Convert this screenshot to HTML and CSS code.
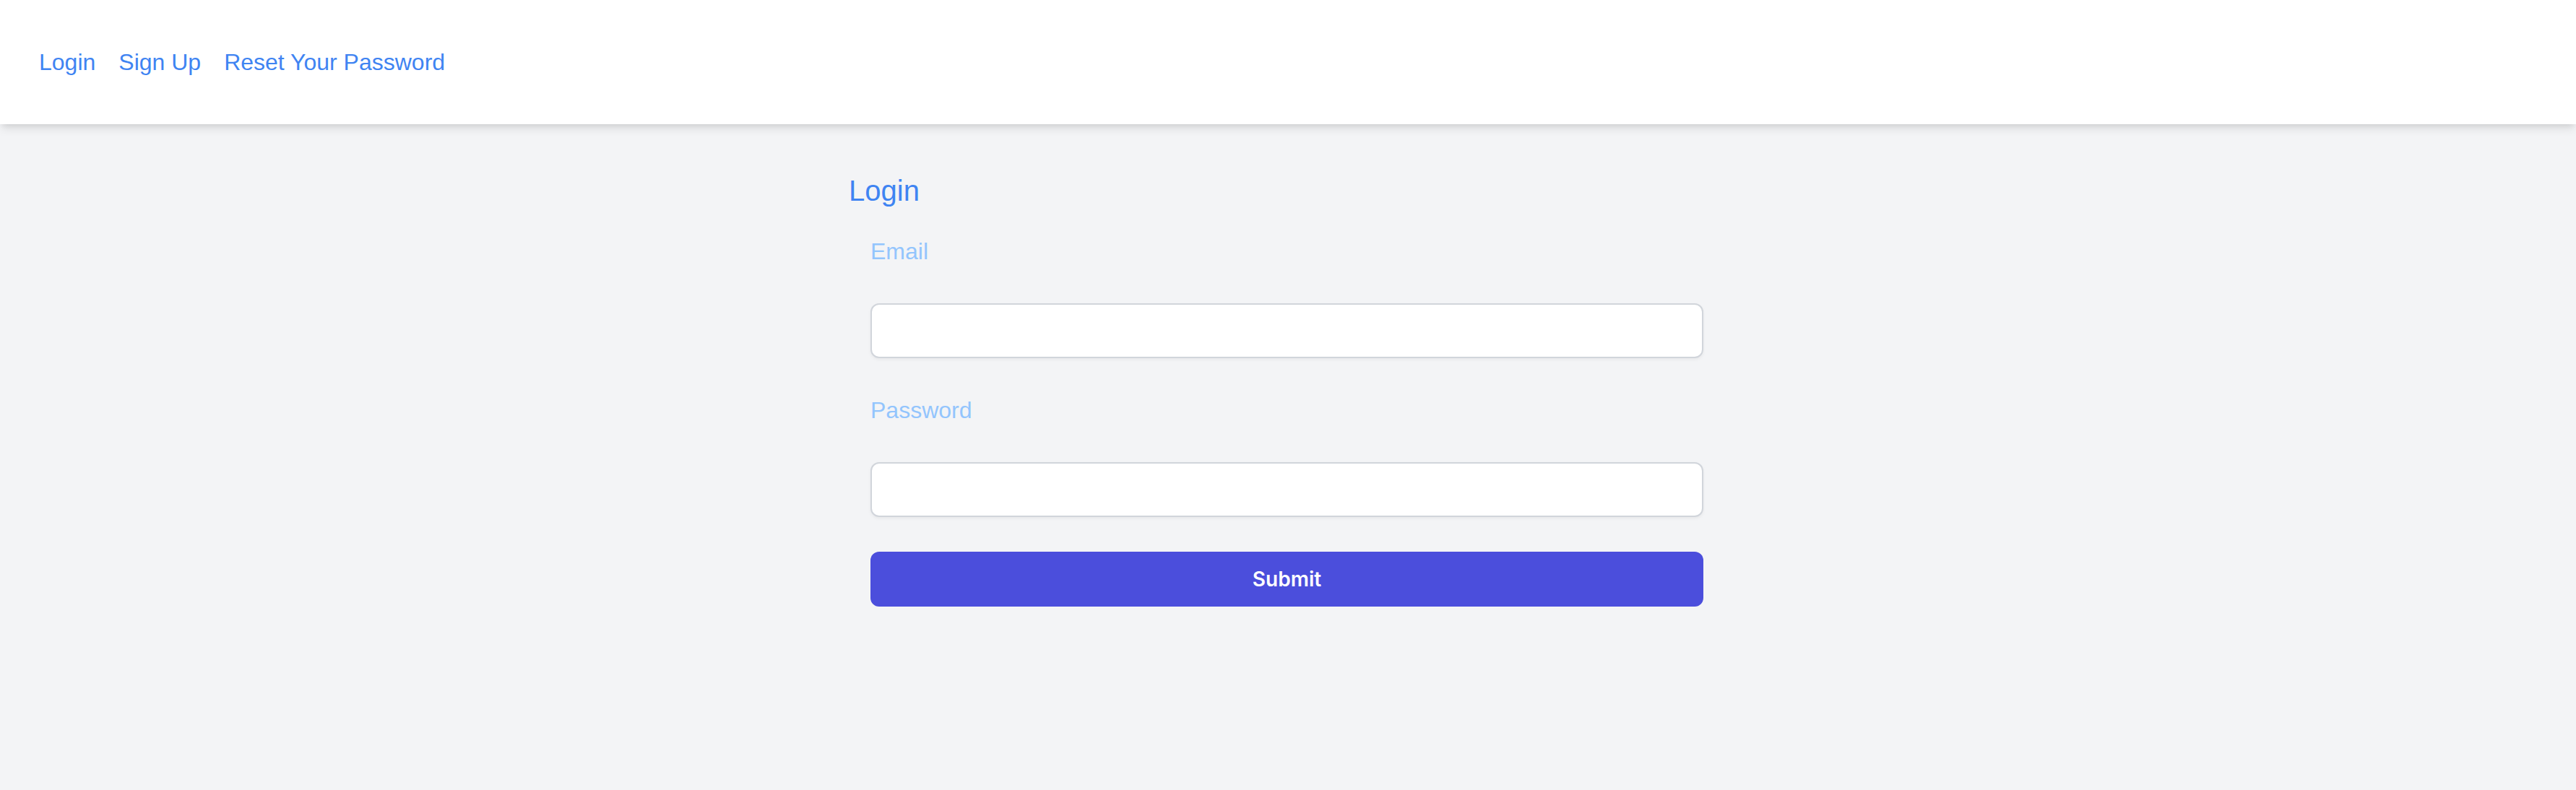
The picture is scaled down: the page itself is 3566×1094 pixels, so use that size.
FILE: index.html
```html
<!DOCTYPE html>
<html lang="en">
<head>
<meta charset="utf-8">
<title>Login</title>
<link rel="stylesheet" href="styles.css">
</head>
<body>
<nav class="topnav">
  <a class="nav-link" href="#">Login</a>
  <a class="nav-link" href="#">Sign Up</a>
  <a class="nav-link" href="#">Reset Your Password</a>
</nav>
<main class="main">
  <section class="panel">
    <h1 class="title">Login</h1>
    <form class="form">
      <label class="label" for="email">Email</label>
      <input class="input" id="email" type="email">
      <label class="label" for="password">Password</label>
      <input class="input" id="password" type="password">
      <button class="submit" type="button">Submit</button>
    </form>
  </section>
</main>
</body>
</html>
```
FILE: styles.css
```css
* { box-sizing: border-box; }
html, body { margin: 0; padding: 0; }
body {
  font-family: "Liberation Sans", Arial, sans-serif;
  background: #f3f4f6;
  min-height: 1094px;
}
.topnav {
  height: 172px;
  background: #ffffff;
  display: flex;
  align-items: center;
  gap: 32px;
  padding-left: 54px;
  box-shadow: 0 8px 12px -2px rgba(0,0,0,0.1), 0 4px 8px -4px rgba(0,0,0,0.1);
  position: relative;
  z-index: 1;
}
.nav-link {
  color: #3f84f2;
  font-size: 32px;
  line-height: 48px;
  text-decoration: none;
}
.main {
  padding-top: 64px;
}
.panel {
  width: 1216px;
  margin: 0 auto;
  padding-right: 2px;
}
.title {
  margin: 0 0 32px 0;
  font-size: 40px;
  line-height: 56px;
  font-weight: 400;
  color: #3f84f2;
}
.form {
  display: flex;
  flex-direction: column;
  gap: 48px;
  padding: 0 31px 0 30px;
}
.label {
  font-size: 32px;
  line-height: 48px;
  color: #93c5fd;
}
.input {
  height: 76px;
  width: 100%;
  background: #ffffff;
  border: 2px solid #d1d5db;
  border-radius: 12px;
  box-shadow: 0 2px 4px rgba(0,0,0,0.05);
  font-size: 28px;
  padding: 0 20px;
  outline: none;
}
.submit {
  height: 76px;
  width: 100%;
  background: #4b4edc;
  color: #ffffff;
  border: none;
  border-radius: 12px;
  font-family: Inter, "Liberation Sans", sans-serif;
  font-size: 28px;
  font-weight: 600;
  cursor: pointer;
}
```
